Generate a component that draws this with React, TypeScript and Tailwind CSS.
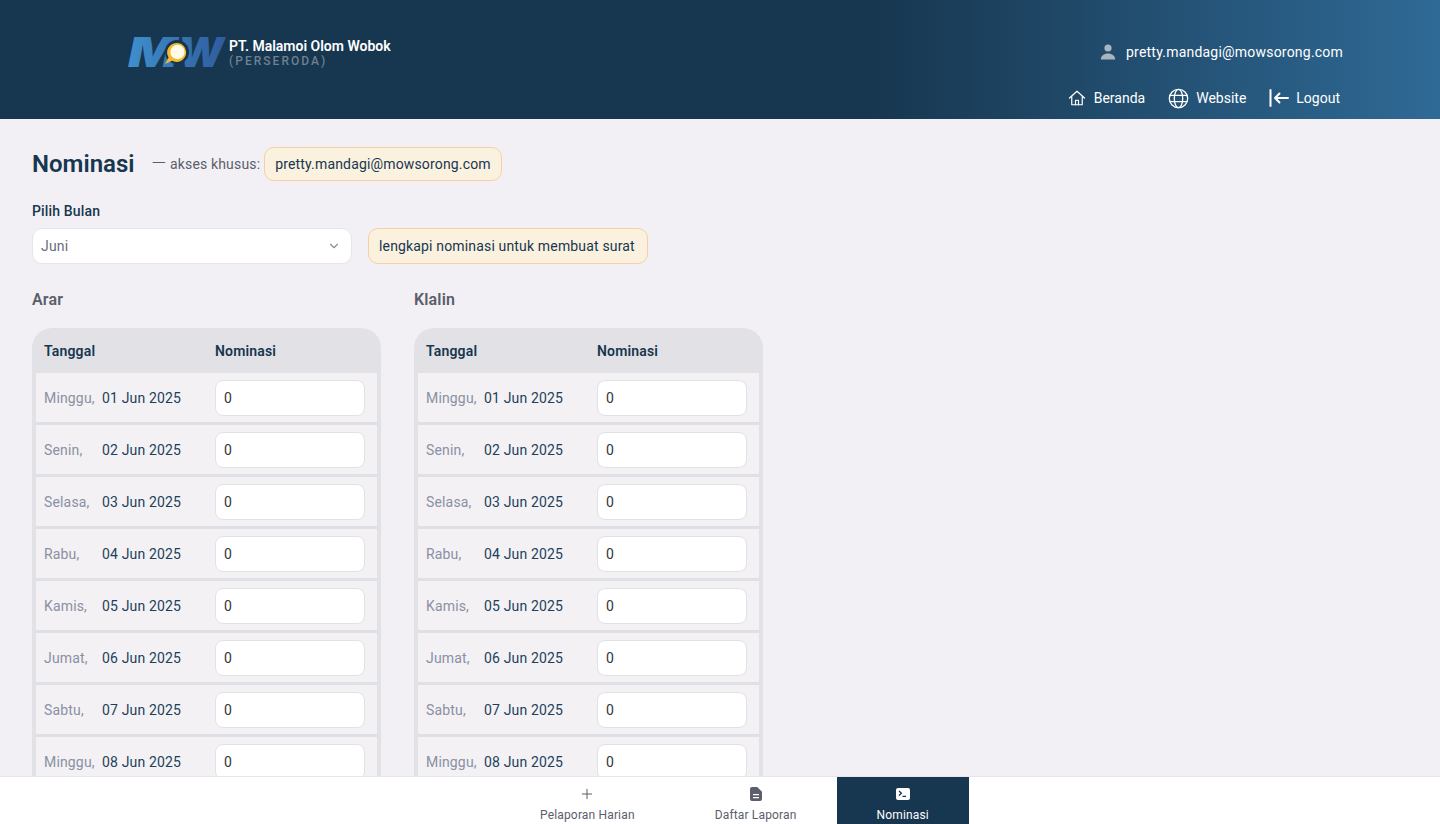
import { ChevronDown, Plus } from 'lucide-react'

const rows = [
  ['Minggu,', '01 Jun 2025'],
  ['Senin,', '02 Jun 2025'],
  ['Selasa,', '03 Jun 2025'],
  ['Rabu,', '04 Jun 2025'],
  ['Kamis,', '05 Jun 2025'],
  ['Jumat,', '06 Jun 2025'],
  ['Sabtu,', '07 Jun 2025'],
  ['Minggu,', '08 Jun 2025'],
]

function Logo() {
  return (
    <svg width="97" height="32" viewBox="0 0 97 32" className="shrink-0 overflow-visible">
      <defs>
        <linearGradient id="logoBlue" gradientUnits="userSpaceOnUse" x1="0" x2="97" y1="0" y2="0">
          <stop offset="0" stopColor="#3f8fcc" />
          <stop offset="1" stopColor="#2f5c9c" />
        </linearGradient>
      </defs>
      <g fontFamily="Inter, sans-serif" fontWeight="900" fontStyle="italic" fontSize="41" fill="url(#logoBlue)">
        <text x="0" y="30" textLength="50" lengthAdjust="spacingAndGlyphs">M</text>
        <text x="50" y="30" textLength="46" lengthAdjust="spacingAndGlyphs">W</text>
      </g>
      <circle cx="49" cy="15" r="12" fill="#17364f" />
      <path d="M37 27l3.6-6.4a9.5 9.5 0 1 1 3.4 3.2z" fill="#f4b92f" />
      <circle cx="49.5" cy="15" r="7.2" fill="#fffbe8" />
    </svg>
  )
}

function HomeIcon() {
  return (
    <svg width="18" height="18" viewBox="0 0 24 24" fill="none" stroke="white" strokeWidth="1.6" strokeLinecap="round" strokeLinejoin="round">
      <path d="M2 12 12 3l10 9" />
      <path d="M5 10v11h14V10" />
      <path d="M10 21v-6h4v6" />
    </svg>
  )
}

function GlobeIcon() {
  return (
    <svg width="21" height="21" viewBox="0 0 24 24" fill="none" stroke="white" strokeWidth="1.5">
      <circle cx="12" cy="12" r="10.5" />
      <ellipse cx="12" cy="12" rx="4.8" ry="10.5" />
      <path d="M2 8.5h20M2 15.5h20" />
    </svg>
  )
}

function LogoutIcon() {
  return (
    <svg width="20" height="18" viewBox="0 0 20 18" fill="none" stroke="white" strokeLinecap="round" strokeLinejoin="round">
      <path d="M1.5 1v16" strokeWidth="2" />
      <path d="M19 9H6M10.5 4.5 6 9l4.5 4.5" strokeWidth="2" />
    </svg>
  )
}

function UserIcon() {
  return (
    <svg width="16" height="16" viewBox="0 0 16 16" fill="#a9b4c0">
      <circle cx="8" cy="4" r="3.6" />
      <path d="M0.8 15.5c0-3.6 3.2-6 7.2-6s7.2 2.4 7.2 6z" />
    </svg>
  )
}

function DocIcon() {
  return (
    <svg width="12" height="14" viewBox="0 0 12 14" fill="#5b5e6b">
      <path fillRule="evenodd" d="M2 0h5.2L12 4.8V12a2 2 0 0 1-2 2H2a2 2 0 0 1-2-2V2a2 2 0 0 1 2-2Zm1 7v1.2h6V7Zm0 3v1.2h6V10Z" />
    </svg>
  )
}

function TerminalIcon() {
  return (
    <svg width="14" height="12" viewBox="0 0 14 12">
      <rect width="14" height="12" rx="2" fill="white" />
      <path d="M3 3l2.4 2.2L3 7.4" fill="none" stroke="#17364f" strokeWidth="1.3" />
      <path d="M6.5 8.4h3.5" stroke="#17364f" strokeWidth="1.3" />
    </svg>
  )
}

function NominasiTable({ title }: { title: string }) {
  return (
    <div className="w-[349px]">
      <h2 className="text-[16px] leading-6 font-semibold text-[#5b5e6b]">{title}</h2>
      <div className="mt-4 rounded-t-[20px] bg-[#e2e2e6] px-1">
        <div className="flex h-[45px] items-center pt-[2px] text-[14px] font-semibold text-[#17364f]">
          <div className="w-[179px] pl-2">Tanggal</div>
          <div>Nominasi</div>
        </div>
        {rows.map(([day, date]) => (
          <div key={date} className="flex h-[52px] items-center border-b-[3px] border-[#dfdfe6] bg-[#f3f1f4] text-[14px]">
            <div className="w-[66px] pt-px pl-2 text-[#8a90a3]">{day}</div>
            <div className="w-[113px] pt-px text-[#1e3f5c]">{date}</div>
            <input
              readOnly
              value="0"
              className="h-9 w-[150px] rounded-lg border border-[#e2e2e6] bg-white px-2 text-[14px] text-[#33333a] outline-none"
            />
          </div>
        ))}
      </div>
    </div>
  )
}

export default function App() {
  return (
    <div className="h-[824px] overflow-hidden bg-[#f2f0f4] font-['Roboto',sans-serif] tracking-[0.01em]">
      <header className="flex h-[119px] items-start justify-between bg-gradient-to-r from-[#17364f] from-60% to-[#2f6a96] pr-[97px] pl-[128px]">
        <div className="mt-[37px] flex items-center gap-[4px]">
          <Logo />
          <div className="tracking-normal">
            <div className="text-[14px] leading-[17px] font-semibold text-white">PT. Malamoi Olom Wobok</div>
            <div className="text-[12px] leading-[13px] font-medium tracking-[0.17em] text-[#6f8092]">(PERSERODA)</div>
          </div>
        </div>
        <div className="mt-[41px] flex flex-col items-end">
          <div className="flex items-center gap-[10px] text-[14px] leading-[22px] tracking-[0.015em] text-white">
            <UserIcon />
            <span>pretty.mandagi@mowsorong.com</span>
          </div>
          <nav className="mt-[24px] mr-[3px] flex items-center gap-[23px] text-[14px] leading-[22px] tracking-normal text-white">
            <span className="flex items-center gap-[8px]"><HomeIcon />Beranda</span>
            <span className="flex items-center gap-[7px]"><GlobeIcon />Website</span>
            <span className="flex items-center gap-[7px]"><LogoutIcon />Logout</span>
          </nav>
        </div>
      </header>

      <main className="px-8 pt-7">
        <div className="flex h-[34px] items-center">
          <h1 className="mb-px text-[24px] font-semibold tracking-normal text-[#17364f]">Nominasi</h1>
          <span className="mb-px ml-[17px] text-[14px] text-[#5b5e6b]"><span className="text-[19px] leading-none font-light">—</span> akses khusus:</span>
          <span className="ml-1 flex h-[34px] items-center rounded-[10px] border border-[#f5d0a6] bg-[#fbf1df] px-[10px] text-[14px] text-[#17364f]">
            pretty.mandagi@mowsorong.com
          </span>
        </div>
        <div className="mt-[20px] text-[14px] leading-[20px] font-medium text-[#17364f]">Pilih Bulan</div>
        <div className="mt-[7px] flex items-center gap-4">
          <div className="flex h-9 w-80 items-center justify-between rounded-[10px] border border-[#e6e6ea] bg-white pr-[10px] pl-2 text-[14px] text-[#6b6e7b]">
            <span>Juni</span>
            <ChevronDown size={14} className="text-[#8a8d9e]" />
          </div>
          <div className="flex h-9 items-center rounded-[10px] border border-[#f5d0a6] bg-[#fbf1df] pr-3 pl-[10px] text-[14px] text-[#17364f]">
            lengkapi nominasi untuk membuat surat
          </div>
        </div>
        <div className="mt-6 flex gap-[33px]">
          <NominasiTable title="Arar" />
          <NominasiTable title="Klalin" />
        </div>
      </main>

      <nav className="fixed right-0 bottom-0 left-0 flex h-[48px] justify-center border-t border-[#e6e6ea] bg-white pl-[29px] text-[12px] text-[#5b5e6b]">
        <div className="flex flex-col items-center justify-end px-10 pb-px">
          <Plus size={16} strokeWidth={1.5} className="mb-[5px]" />
          <span className="leading-[16px]">Pelaporan Harian</span>
        </div>
        <div className="flex flex-col items-center justify-end px-10 pb-px">
          <span className="mb-[6px]"><DocIcon /></span>
          <span className="leading-[16px]">Daftar Laporan</span>
        </div>
        <div className="flex flex-col items-center justify-end bg-[#17364f] px-10 pb-px text-white">
          <span className="mb-[7px]"><TerminalIcon /></span>
          <span className="leading-[16px]">Nominasi</span>
        </div>
      </nav>
    </div>
  )
}
